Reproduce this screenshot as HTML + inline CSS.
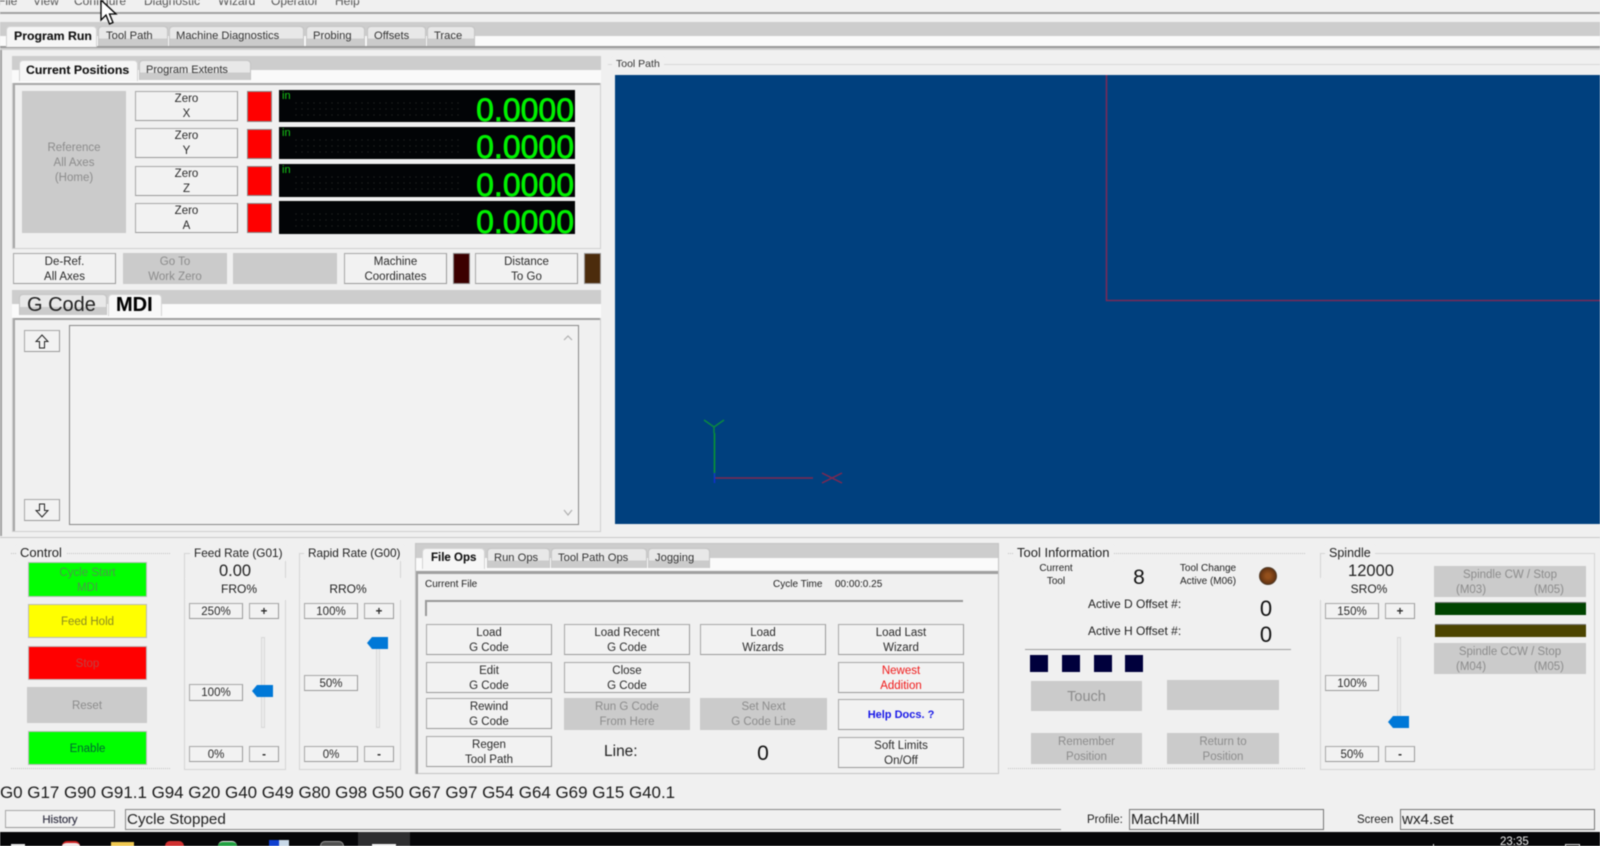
<!DOCTYPE html>
<html><head><meta charset="utf-8"><title>Mach4</title>
<style>
html,body{margin:0;padding:0;background:#f0f0f0;width:1600px;height:846px;overflow:hidden;font-family:"Liberation Sans",sans-serif;color:#222}
#r{position:relative;width:1600px;height:846px;overflow:hidden;filter:blur(.45px)}
#r div,#r span.a{position:absolute;box-sizing:border-box}
.b{background:#f2f2f2;border:1px solid #a8a8a8;border-right-color:#999;border-bottom-color:#999;display:flex;align-items:center;justify-content:center;text-align:center;font-size:11.5px;line-height:15px;color:#2a2a2a;padding-top:2px}
.d{background:#cbcbcb;border:0;color:#8c8c8c}
.band{background:#cdcdcd;height:14px}
.wh{background:#fafafa}
.ln{background:#9a9a9a}
.t{white-space:nowrap}
.tab{background:linear-gradient(#e8e8e8 0,#e8e8e8 60%,#cbcbcb 60%,#cbcbcb 100%);border:1px solid #c4c4c4;border-bottom:0;border-radius:4px 4px 0 0;font-size:11.2px;color:#333;text-align:left;padding-left:6px;white-space:nowrap}
.act{background:#f6f6f6;color:#111;font-weight:bold;border-color:#d4d4d4;-webkit-text-stroke:.1px #111}
.red{background:#f00;border:1px solid #888}
.dro{background:#020406;color:#00f000;overflow:hidden}
.dro:before{content:"";position:absolute;left:14px;top:10px;width:170px;height:20px;background-image:radial-gradient(circle,#2a2a2a .6px,transparent .8px);background-size:6px 6px}
.dro b{position:absolute;right:1px;bottom:-5px;font-size:32px;line-height:34px;font-weight:normal;-webkit-text-stroke:.8px #00f000}
.dro i{position:absolute;left:3px;top:1px;font-style:normal;font-size:11px;line-height:11px;color:#14c814}
.grp{border:1px dotted #c4c4c4}
.h{background:#0078d7}
.tr{background:#ececec;border:1px solid #d8d8d8}
</style></head><body><div id="r">

<!-- menu -->
<div class="t" style="left:0;top:-6px;font-size:12px;line-height:14px;color:#555;width:400px;height:14px">
<span style="position:absolute;left:-2px">File</span><span style="position:absolute;left:33px">View</span><span style="position:absolute;left:74px">Configure</span><span style="position:absolute;left:144px">Diagnostic</span><span style="position:absolute;left:218px">Wizard</span><span style="position:absolute;left:271px">Operator</span><span style="position:absolute;left:335px">Help</span></div>
<div style="left:0;top:12px;width:1600px;height:2px;background:#a2a2a2"></div>

<!-- top tabs -->
<div class="band" style="left:0;top:22px;width:1600px"></div>
<div class="wh" style="left:0;top:36px;width:1600px;height:10px"></div>
<div class="ln" style="left:0;top:46px;width:1600px;height:2px"></div>
<div style="left:0;top:48px;width:1600px;height:2px;background:#d0d0d0"></div>
<div class="tab act" style="left:6px;top:26px;width:91px;height:21px;line-height:19px;font-size:12.300px;padding-left:7px">Program Run</div>
<div class="tab" style="left:98px;top:26px;width:70px;height:20px;line-height:18px;padding-left:7px">Tool Path</div>
<div class="tab" style="left:169px;top:26px;width:135px;height:20px;line-height:18px;padding-left:6px">Machine Diagnostics</div>
<div class="tab" style="left:306px;top:26px;width:59px;height:20px;line-height:18px">Probing</div>
<div class="tab" style="left:367px;top:26px;width:59px;height:20px;line-height:18px">Offsets</div>
<div class="tab" style="left:427px;top:26px;width:48px;height:20px;line-height:18px">Trace</div>
<div style="left:0;top:50px;width:2px;height:486px;background:#a0a0a0"></div>

<!-- current positions panel -->
<div style="left:12px;top:56px;width:589px;height:193px;border:1px solid #cfcfcf"></div>
<div class="band" style="left:12px;top:56px;width:589px"></div>
<div class="wh" style="left:12px;top:70px;width:589px;height:13px"></div>
<div style="left:13px;top:83px;width:587px;height:2px;background:#a6a6a6"></div>
<div style="left:13px;top:83px;width:2px;height:165px;background:#a6a6a6"></div>
<div class="tab act" style="left:19px;top:60px;width:119px;height:21px;line-height:19px;font-size:12.300px;padding-left:6px">Current Positions</div>
<div class="tab" style="left:139px;top:60px;width:112px;height:20px;line-height:18px;font-size:11px">Program Extents</div>

<div class="b d" style="left:22px;top:91px;width:104px;height:142px;line-height:15px">Reference<br>All Axes<br>(Home)</div>
<div class="b" style="left:135px;top:91px;width:103px;height:30px">Zero<br>X</div>
<div class="b" style="left:135px;top:128px;width:103px;height:30px">Zero<br>Y</div>
<div class="b" style="left:135px;top:166px;width:103px;height:30px">Zero<br>Z</div>
<div class="b" style="left:135px;top:203px;width:103px;height:30px">Zero<br>A</div>
<div class="red" style="left:247px;top:91px;width:25px;height:31px"></div>
<div class="red" style="left:247px;top:129px;width:25px;height:30px"></div>
<div class="red" style="left:247px;top:166px;width:25px;height:30px"></div>
<div class="red" style="left:247px;top:203px;width:25px;height:30px"></div>
<div class="dro" style="left:279px;top:90px;width:296px;height:32px"><i>in</i><b>0.0000</b></div>
<div class="dro" style="left:279px;top:127px;width:296px;height:32px"><i>in</i><b>0.0000</b></div>
<div class="dro" style="left:279px;top:164px;width:296px;height:33px"><i>in</i><b>0.0000</b></div>
<div class="dro" style="left:279px;top:201px;width:296px;height:33px"><b>0.0000</b></div>

<div class="b" style="left:13px;top:253px;width:103px;height:31px">De-Ref.<br>All Axes</div>
<div class="b d" style="left:123px;top:253px;width:104px;height:31px">Go To<br>Work Zero</div>
<div class="b d" style="left:233px;top:253px;width:104px;height:31px"></div>
<div class="b" style="left:344px;top:253px;width:103px;height:31px">Machine<br>Coordinates</div>
<div style="left:453px;top:253px;width:17px;height:31px;background:#3c0000;border:1px solid #888"></div>
<div class="b" style="left:475px;top:253px;width:103px;height:31px">Distance<br>To Go</div>
<div style="left:584px;top:253px;width:17px;height:31px;background:#4c2c0c;border:1px solid #999"></div>

<!-- gcode panel -->
<div style="left:12px;top:290px;width:589px;height:242px;border:1px solid #cfcfcf"></div>
<div class="band" style="left:12px;top:290px;width:589px"></div>
<div class="wh" style="left:12px;top:304px;width:589px;height:14px"></div>
<div style="left:13px;top:318px;width:587px;height:2px;background:#a0a0a0"></div>
<div style="left:13px;top:318px;width:2px;height:213px;background:#a6a6a6"></div>
<div class="tab" style="left:19px;top:294px;width:88px;height:21px;line-height:20px;font-size:20px;color:#222;padding-left:7px">G Code</div>
<div class="tab act" style="left:108px;top:294px;width:54px;height:22px;line-height:21px;font-size:20px;color:#000;background:#f8f8f8;padding-left:7px">MDI</div>

<div class="b" style="left:24px;top:330px;width:36px;height:22px;padding-top:0"><svg width="14" height="15" viewBox="0 0 14 15"><path d="M7 1 L13 7.5 H9.5 V14 H4.5 V7.5 H1 Z" fill="none" stroke="#222" stroke-width="1"/></svg></div>
<div class="b" style="left:24px;top:499px;width:36px;height:22px;padding-top:0"><svg width="14" height="15" viewBox="0 0 14 15"><path d="M7 14 L13 7.5 H9.5 V1 H4.5 V7.5 H1 Z" fill="none" stroke="#222" stroke-width="1"/></svg></div>
<div style="left:69px;top:325px;width:510px;height:200px;border:1px solid #888;background:#f2f2f2"></div>
<svg style="position:absolute;left:563px;top:334px" width="10" height="190"><path d="M1 6 L5 2 L9 6" fill="none" stroke="#b0b0b0" stroke-width="1.2"/><path d="M1 176 L5 181 L9 176" fill="none" stroke="#b0b0b0" stroke-width="1.2"/></svg>

<!-- tool path -->
<div style="left:608px;top:64px;width:992px;height:1px;background:#d8d8d8"></div>
<div class="t" style="left:612px;top:57px;font-size:10.5px;line-height:14px;background:#f0f0f0;padding:0 4px;color:#333">Tool Path</div>
<div style="left:615px;top:75px;width:985px;height:449px;background:#00407e"></div>
<svg style="position:absolute;left:615px;top:75px" width="985" height="449">
<path d="M491.500 0V225.500H985" fill="none" stroke="#782a58" stroke-width="1.600"/>
<path d="M99.500 358V403" stroke="#0a9a30" stroke-width="1.500" fill="none"/>
<path d="M99 352V358M99 352L89 345M99 352L109 345" stroke="#0a8a40" stroke-width="1.500" fill="none"/>
<path d="M99 403H198" stroke="#802850" stroke-width="1.500" fill="none"/>
<path d="M207 398L227 408M207 408L227 398" stroke="#802850" stroke-width="1.500" fill="none"/>
<path d="M99.500 398V408" stroke="#1030d0" stroke-width="1.500" fill="none"/>
</svg>

<div style="left:0;top:537px;width:1600px;height:1px;background:#c8c8c8"></div>

<!-- control -->
<div class="grp" style="left:11px;top:553px;width:159px;height:216px;border-left:0;border-right:0"></div>
<div class="t" style="left:16px;top:545px;font-size:13px;line-height:16px;background:#f0f0f0;padding:0 4px">Control</div>
<div class="b" style="left:28px;top:562px;width:119px;height:35px;background:#00ff00;color:#4a9a4a;border-color:#bbb">Cycle Start<br>MDI</div>
<div class="b" style="left:28px;top:604px;width:119px;height:34px;background:#ffff00;color:#8a8a20;border-color:#bbb">Feed Hold</div>
<div class="b" style="left:28px;top:646px;width:119px;height:34px;background:#ff0000;color:#c04040;border-color:#bbb">Stop</div>
<div class="b d" style="left:27px;top:687px;width:120px;height:36px">Reset</div>
<div class="b" style="left:28px;top:731px;width:119px;height:34px;background:#00ff00;color:#063;border-color:#bbb">Enable</div>

<!-- feed rate -->
<div class="grp" style="left:184px;top:553px;width:102px;height:217px;border-style:solid;border-color:#d4d4d4"></div>
<div class="t" style="left:190px;top:545px;font-size:11.800px;line-height:16px;background:#f0f0f0;padding:0 4px">Feed Rate (G01)</div>
<div style="left:185px;top:578px;width:101px;height:22px;background:#f0f0f0"></div>
<div class="t" style="left:185px;top:561px;width:100px;text-align:center;font-size:16.500px;line-height:20px">0.00</div>
<div class="t" style="left:189px;top:582px;width:100px;text-align:center;font-size:12px;line-height:15px">FRO%</div>
<div class="b" style="left:189px;top:603px;width:54px;height:16px">250%</div>
<div class="b" style="left:249px;top:603px;width:30px;height:16px;font-weight:bold">+</div>
<div class="b" style="left:189px;top:684px;width:54px;height:17px">100%</div>
<div class="tr" style="left:261px;top:637px;width:4px;height:91px"></div>
<svg style="position:absolute;left:252px;top:685px" width="21" height="12"><path d="M0 6 L5 0 H21 V12 H5 Z" fill="#0078d7"/></svg>
<div class="b" style="left:189px;top:746px;width:54px;height:16px">0%</div>
<div class="b" style="left:249px;top:746px;width:30px;height:16px;font-weight:bold">-</div>

<!-- rapid -->
<div class="grp" style="left:299px;top:553px;width:102px;height:217px;border-style:solid;border-color:#d4d4d4"></div>
<div class="t" style="left:304px;top:545px;font-size:11.800px;line-height:16px;background:#f0f0f0;padding:0 4px">Rapid Rate (G00)</div>
<div style="left:300px;top:578px;width:101px;height:22px;background:#f0f0f0"></div>
<div class="t" style="left:298px;top:582px;width:100px;text-align:center;font-size:12px;line-height:15px">RRO%</div>
<div class="b" style="left:304px;top:603px;width:54px;height:16px">100%</div>
<div class="b" style="left:364px;top:603px;width:30px;height:16px;font-weight:bold">+</div>
<div class="b" style="left:304px;top:675px;width:54px;height:16px">50%</div>
<div class="tr" style="left:376px;top:637px;width:4px;height:91px"></div>
<svg style="position:absolute;left:367px;top:637px" width="21" height="12"><path d="M0 6 L5 0 H21 V12 H5 Z" fill="#0078d7"/></svg>
<div class="b" style="left:304px;top:746px;width:54px;height:16px">0%</div>
<div class="b" style="left:364px;top:746px;width:30px;height:16px;font-weight:bold">-</div>

<!-- file ops -->
<div style="left:415px;top:543px;width:584px;height:231px;border:1px solid #c4c4c4"></div>
<div class="band" style="left:416px;top:544px;width:582px"></div>
<div class="wh" style="left:416px;top:558px;width:582px;height:12px"></div>
<div style="left:416px;top:571px;width:582px;height:3px;background:#a0a0a0"></div>
<div style="left:416px;top:571px;width:2px;height:203px;background:#a0a0a0"></div>
<div class="tab act" style="left:422px;top:548px;width:63px;height:21px;line-height:19px;font-size:11.500px;padding-left:8px">File Ops</div>
<div class="tab" style="left:487px;top:548px;width:63px;height:20px;line-height:18px">Run Ops</div>
<div class="tab" style="left:551px;top:548px;width:96px;height:20px;line-height:18px">Tool Path Ops</div>
<div class="tab" style="left:648px;top:548px;width:62px;height:20px;line-height:18px">Jogging</div>
<div class="t" style="left:425px;top:579px;font-size:10px;line-height:12px">Current File</div>
<div class="t" style="left:773px;top:579px;font-size:10px;line-height:12px">Cycle Time</div>
<div class="t" style="left:835px;top:579px;font-size:10px;line-height:12px">00:00:0.25</div>
<div style="left:425px;top:600px;width:538px;height:2px;background:#999"></div>
<div style="left:425px;top:600px;width:2px;height:16px;background:#999"></div>

<div class="b" style="left:426px;top:624px;width:126px;height:31px">Load<br>G Code</div>
<div class="b" style="left:564px;top:624px;width:126px;height:31px">Load Recent<br>G Code</div>
<div class="b" style="left:700px;top:624px;width:126px;height:31px">Load<br>Wizards</div>
<div class="b" style="left:838px;top:624px;width:126px;height:31px">Load Last<br>Wizard</div>
<div class="b" style="left:426px;top:662px;width:126px;height:31px">Edit<br>G Code</div>
<div class="b" style="left:564px;top:662px;width:126px;height:31px">Close<br>G Code</div>
<div class="b" style="left:838px;top:662px;width:126px;height:31px;color:#f01818">Newest<br>Addition</div>
<div class="b" style="left:426px;top:698px;width:126px;height:31px">Rewind<br>G Code</div>
<div class="b d" style="left:564px;top:698px;width:126px;height:32px">Run G Code<br>From Here</div>
<div class="b d" style="left:700px;top:698px;width:127px;height:32px">Set Next<br>G Code Line</div>
<div class="b" style="left:838px;top:699px;width:126px;height:31px;color:#1818e8;font-weight:bold;font-size:11px">Help Docs. ?</div>
<div class="b" style="left:426px;top:736px;width:126px;height:31px">Regen<br>Tool Path</div>
<div class="b" style="left:838px;top:737px;width:126px;height:31px">Soft Limits<br>On/Off</div>
<div class="t" style="left:604px;top:743px;font-size:15.500px;line-height:18px">Line:</div>
<div class="t" style="left:713px;top:741px;width:100px;text-align:center;font-size:21px;line-height:26px;color:#111">0</div>

<!-- tool info -->
<div class="grp" style="left:1008px;top:553px;width:297px;height:216px;border-left:0;border-right:0"></div>
<div class="t" style="left:1013px;top:545px;font-size:13px;line-height:16px;background:#f0f0f0;padding:0 4px">Tool Information</div>
<div class="t" style="left:1006px;top:562px;width:100px;text-align:center;font-size:10px;line-height:13px">Current<br>Tool</div>
<div class="t" style="left:1089px;top:565px;width:100px;text-align:center;font-size:21px;line-height:26px;color:#111">8</div>
<div class="t" style="left:1158px;top:562px;width:100px;text-align:center;font-size:10px;line-height:13px">Tool Change<br>Active (M06)</div>
<div style="left:1259px;top:567px;width:18px;height:18px;border-radius:50%;background:radial-gradient(circle,#94501c 20%,#5e3010 75%);border:1px solid #4f3a28"></div>
<div class="t" style="left:1088px;top:597px;font-size:12px;line-height:15px">Active D Offset #:</div>
<div class="t" style="left:1216px;top:596px;width:100px;text-align:center;font-size:22px;line-height:26px;color:#111">0</div>
<div class="t" style="left:1088px;top:624px;font-size:12px;line-height:15px">Active H Offset #:</div>
<div class="t" style="left:1216px;top:622px;width:100px;text-align:center;font-size:22px;line-height:26px;color:#111">0</div>
<div style="left:1025px;top:649px;width:266px;height:1px;background:#a0a0a0"></div>
<div style="left:1030px;top:655px;width:18px;height:17px;background:#00003c"></div>
<div style="left:1062px;top:655px;width:18px;height:17px;background:#00003c"></div>
<div style="left:1094px;top:655px;width:18px;height:17px;background:#00003c"></div>
<div style="left:1125px;top:655px;width:18px;height:17px;background:#00003c"></div>
<div class="b d" style="left:1031px;top:681px;width:111px;height:30px;font-size:14.500px">Touch</div>
<div class="b d" style="left:1167px;top:680px;width:112px;height:30px"></div>
<div class="b d" style="left:1031px;top:733px;width:111px;height:31px">Remember<br>Position</div>
<div class="b d" style="left:1167px;top:733px;width:112px;height:31px">Return to<br>Position</div>

<!-- spindle -->
<div class="grp" style="left:1320px;top:553px;width:275px;height:217px;border-style:solid;border-color:#d4d4d4"></div>
<div class="t" style="left:1325px;top:545px;font-size:12.500px;line-height:16px;background:#f0f0f0;padding:0 4px">Spindle</div>
<div style="left:1319px;top:578px;width:5px;height:22px;background:#f0f0f0"></div>
<div class="t" style="left:1321px;top:561px;width:100px;text-align:center;font-size:16.500px;line-height:20px">12000</div>
<div class="t" style="left:1319px;top:582px;width:100px;text-align:center;font-size:12px;line-height:15px">SRO%</div>
<div class="b" style="left:1325px;top:603px;width:54px;height:16px">150%</div>
<div class="b" style="left:1385px;top:603px;width:30px;height:16px;font-weight:bold">+</div>
<div class="b" style="left:1325px;top:675px;width:54px;height:16px">100%</div>
<div class="tr" style="left:1397px;top:637px;width:4px;height:91px"></div>
<svg style="position:absolute;left:1388px;top:716px" width="21" height="12"><path d="M0 6 L5 0 H21 V12 H5 Z" fill="#0078d7"/></svg>
<div class="b" style="left:1325px;top:746px;width:54px;height:16px">50%</div>
<div class="b" style="left:1385px;top:746px;width:30px;height:16px;font-weight:bold">-</div>
<div class="b d" style="left:1434px;top:566px;width:152px;height:31px"><span>Spindle CW / Stop<br>(M03)&nbsp;&nbsp;&nbsp;&nbsp;&nbsp;&nbsp;&nbsp;&nbsp;&nbsp;&nbsp;&nbsp;&nbsp;&nbsp;&nbsp;&nbsp;(M05)</span></div>
<div style="left:1435px;top:602px;width:151px;height:13px;background:#004400;border-top:1px solid #777"></div>
<div style="left:1435px;top:624px;width:151px;height:13px;background:#4c4400;border-top:1px solid #777"></div>
<div class="b d" style="left:1434px;top:643px;width:152px;height:31px"><span>Spindle CCW / Stop<br>(M04)&nbsp;&nbsp;&nbsp;&nbsp;&nbsp;&nbsp;&nbsp;&nbsp;&nbsp;&nbsp;&nbsp;&nbsp;&nbsp;&nbsp;&nbsp;(M05)</span></div>

<!-- G line -->
<div class="t" style="left:0;top:783px;font-size:16.950px;line-height:20px;color:#1a1a1a">G0 G17 G90 G91.1 G94 G20 G40 G49 G80 G98 G50 G67 G97 G54 G64 G69 G15 G40.1</div>

<!-- status -->
<div class="b" style="left:5px;top:810px;width:110px;height:18px;font-size:11.300px;padding-top:3px;color:#334;-webkit-text-stroke:.2px #334">History</div>
<div style="left:125px;top:809px;width:936px;height:21px;border:1px solid #888;border-right:0;font-size:15.200px;line-height:19px;padding-left:1px;background:#f0f0f0">Cycle Stopped</div>
<div class="t" style="left:1087px;top:813px;font-size:11.500px;line-height:14px">Profile:</div>
<div style="left:1129px;top:809px;width:195px;height:21px;border:1px solid #777;font-size:15.200px;line-height:19px;padding-left:1px">Mach4Mill</div>
<div class="t" style="left:1357px;top:813px;font-size:11.500px;line-height:14px">Screen</div>
<div style="left:1400px;top:809px;width:195px;height:21px;border:1px solid #777;font-size:15.200px;line-height:19px;padding-left:1px">wx4.set</div>

<!-- taskbar -->
<div style="left:0;top:832px;width:1600px;height:14px;background:#060608"></div>
<div style="left:358px;top:832px;width:52px;height:14px;background:#2e2e30"></div>
<div style="left:372px;top:844px;width:24px;height:2px;background:#f4f4f4"></div>
<div style="left:11px;top:844px;width:14px;height:2px;background:#e8e8e8"></div>
<div style="left:62px;top:841px;width:18px;height:5px;background:#f0e8e8;border-top:2px solid #d02020;border-radius:9px 9px 0 0"></div>
<div style="left:111px;top:842px;width:23px;height:4px;background:#f0c850"></div>
<div style="left:165px;top:841px;width:19px;height:5px;background:#d03030;border-radius:10px 10px 0 0"></div>
<div style="left:218px;top:841px;width:19px;height:5px;background:#20a040;border-radius:10px 10px 0 0;border-top:1px solid #eee"></div>
<div style="left:269px;top:840px;width:20px;height:6px;background:linear-gradient(90deg,#1040d0 50%,#c8d8e8 50%)"></div>
<div style="left:320px;top:841px;width:24px;height:5px;background:#505050;border:1px solid #999;border-bottom:0;border-radius:12px 12px 0 0"></div>
<div class="t" style="left:1500px;top:836px;font-size:11.500px;line-height:12px;color:#eee">23:35</div>
<div style="left:1433px;top:844px;width:1px;height:2px;background:#ddd"></div>
<div style="left:1565px;top:844px;width:15px;height:2px;border:1px solid #ddd;border-bottom:0"></div>

<!-- cursor -->
<svg style="position:absolute;left:100px;top:0" width="18" height="26" viewBox="0 0 18 26"><path d="M1 0 V20 L6 15 L9.500 24 L13 22.500 L9.500 14 H16 Z" fill="#fff" stroke="#000" stroke-width="1.300"/></svg>

</div></body></html>
